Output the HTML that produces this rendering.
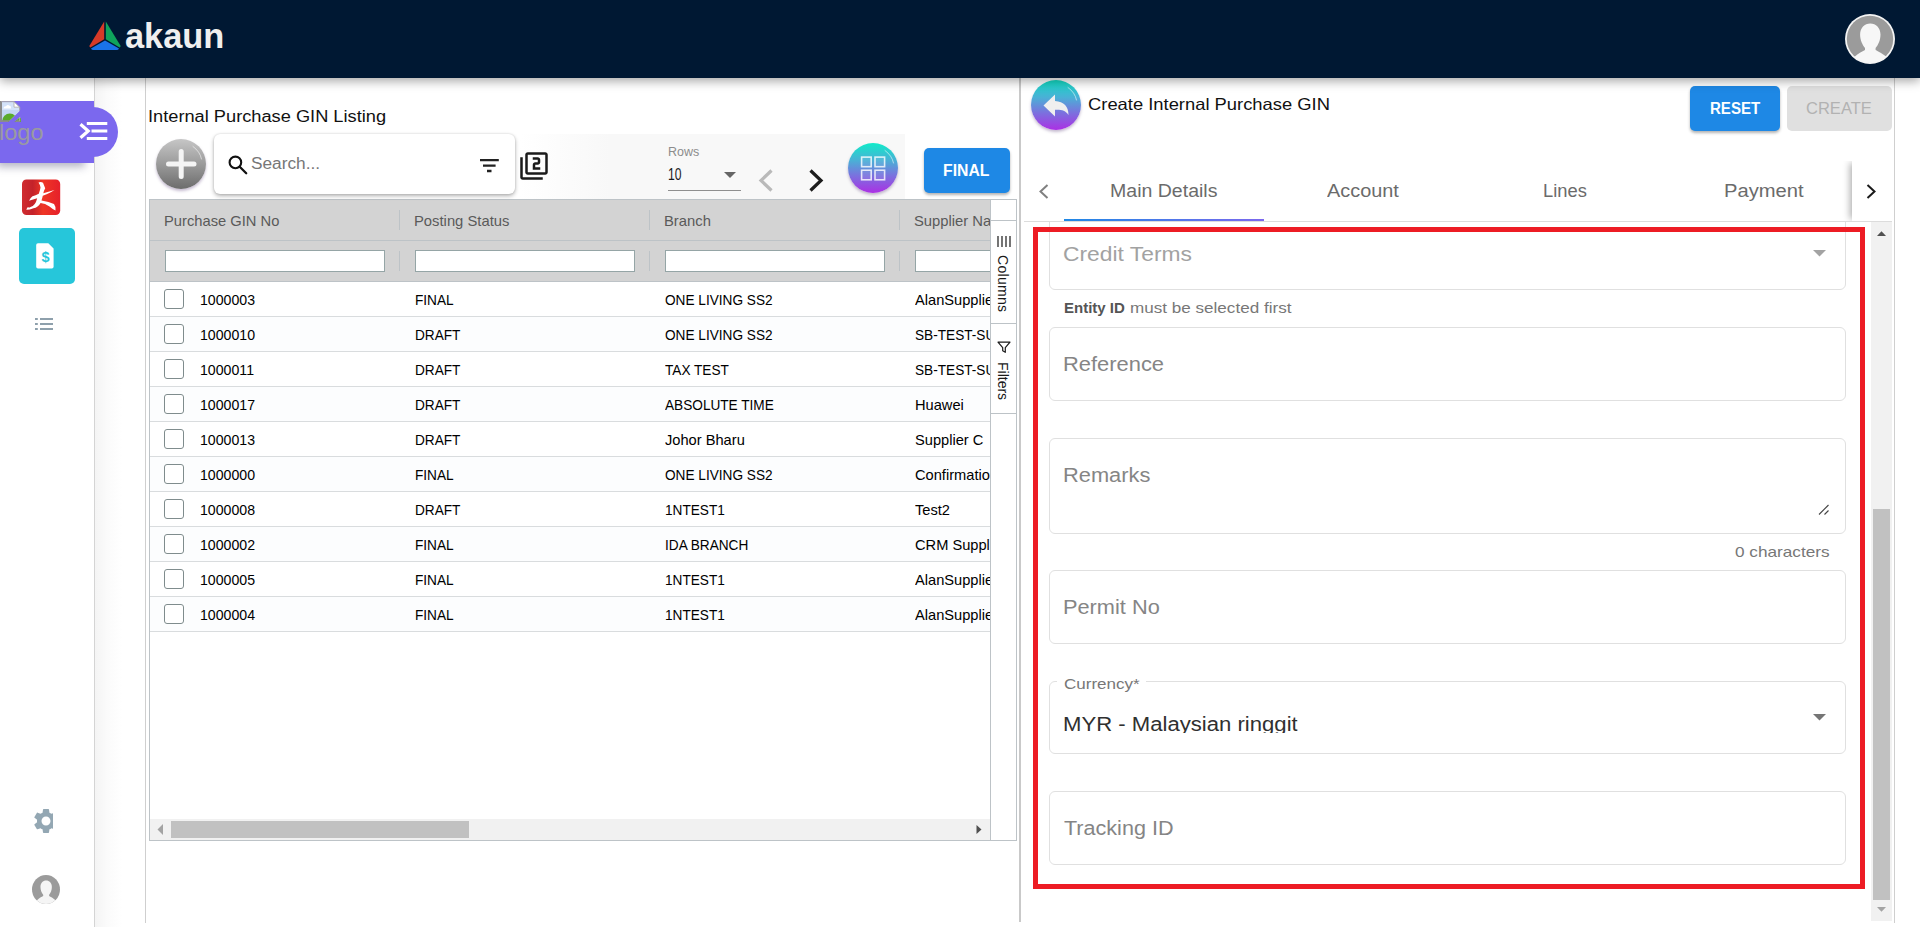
<!DOCTYPE html>
<html lang="en">
<head>
<meta charset="utf-8">
<title>Internal Purchase GIN</title>
<style>
*{box-sizing:border-box;margin:0;padding:0}
html,body{width:1920px;height:927px;overflow:hidden;background:#fff}
body{position:relative;font-family:"Liberation Sans",sans-serif;color:#111}
.abs{position:absolute}
.t{position:absolute;white-space:nowrap;line-height:1;transform-origin:0 0}
/* header */
#hdr{left:0;top:0;width:1920px;height:78px;background:#001833;box-shadow:0 3px 10px rgba(0,0,0,.36);z-index:20}
#brand{left:124px;top:17px;font-size:35px;font-weight:bold;color:#efefef}
/* sidebar */
#side{left:0;top:78px;width:95px;height:849px;background:#fff;border-right:1px solid #d4d4d4;z-index:5}
#strip{left:95px;top:78px;width:50px;height:849px;background:linear-gradient(90deg,#f4f4f4 0,#fbfbfb 25%,#fff 55%,#fff 100%)}
#ptab{left:0;top:101px;width:94px;height:62px;background:#7b68ee;box-shadow:-6px 7px 8px -3px rgba(60,60,100,.38);z-index:6}
#ppill{left:60px;top:107px;width:58px;height:50px;border-radius:0 25px 25px 0;background:#7b68ee;z-index:6}
#logotxt{left:0;top:120px;font-size:22px;color:#9a9aa0;z-index:7}
/* listing */
#ltitle{left:148px;top:107px;font-size:16px;color:#111}
#grid{left:149px;top:199px;width:868px;height:642px;border:1px solid #bdc3c7;background:#fff;overflow:hidden}
#ghead{left:0;top:0;width:840px;height:82px;background:#d3d3d3}
.hl{position:absolute;left:0;width:840px;height:1px;background:#bdc3c7}
.hc{position:absolute;transform-origin:0 0;top:13px;font-size:14.500px;color:#5a5a5a;white-space:nowrap;line-height:16px}
.sep{position:absolute;width:1px;background:#bdc3c7}
.fi{position:absolute;top:50px;width:220px;height:22px;background:#fff;border:1px solid #95a5a6}
.row{position:absolute;left:0;width:840px;height:35px;border-bottom:1px solid #d9dcde;background:#fff;font-size:14.500px;color:#000}
.row.e{background:#fcfdfe}
.row span{position:absolute;top:10px;line-height:16px;white-space:nowrap;transform-origin:0 0;transform:scaleX(.94)}
.row i{position:absolute;left:14px;top:7px;width:20px;height:20px;border:1px solid #7f8c8d;border-radius:3px;background:#fff}
.c1{left:50.300px}
.row span.c1{transform:scaleX(.975)}
.row span.m{transform:scaleX(1.01)}.c2{left:265px}.c3{left:515px}.c4{left:765px}
#gbody{left:0;top:0;width:840px;height:619px;overflow:hidden}
#hsb{left:0;top:619px;width:840px;height:21px;background:#f1f1f1}
#sbar{left:840px;top:0;width:26px;height:640px;border-left:1px solid #bdc3c7;background:#fff}
.sl{position:absolute;left:0;width:26px;height:1px;background:#bdc3c7}
.vt{position:absolute;left:5px;writing-mode:vertical-lr;font-size:14px;color:#1a1a1a;line-height:14px;white-space:nowrap}
/* toolbar */
#tbg{left:520px;top:134px;width:385px;height:65px;background:linear-gradient(90deg,#fff 0,#f8f8f8 90px,#f8f8f8 100%)}
.rb{width:50px;height:50px;border-radius:50%;box-shadow:0 2px 3px rgba(90,60,120,.35)}
#addb{left:156px;top:139px;background:linear-gradient(180deg,#c6c6c6 0,#9b9b9b 50%,#6c6c6c 100%)}
#gridb{left:848px;top:143px;background:linear-gradient(180deg,#10ebc9 0,#4ab0d6 35%,#7a72de 65%,#ab30e4 100%)}
#sbox{left:214px;top:134px;width:301px;height:60px;background:#fff;border-radius:6px;box-shadow:0 2px 4px rgba(0,0,0,.3),0 0 2px rgba(0,0,0,.15)}
#stxt{left:37px;top:22px;font-size:16px;color:#777}
#rowsl{left:668px;top:146px;font-size:12.500px;color:#8c8c8c}
#rowsv{left:668px;top:166px;font-size:16px;color:#1a1a1a}
.btn{height:45px;border-radius:5px;text-align:center;font-weight:bold;font-size:16px;line-height:45px;white-space:nowrap}
#finalb{left:924px;top:148px;width:86px;background:#1e88e5;color:#fff;box-shadow:0 2px 3px rgba(0,0,0,.3)}
/* right panel */
#vdiv{left:1019px;top:78px;width:2px;height:844px;background:#c9c9c9}
#rline{left:1894px;top:78px;width:1px;height:845px;background:#cfcfcf}
.fld{position:absolute;left:1049px;width:797px;border:1px solid #e0e0e0;border-radius:6px;background:#fff}
.lab{position:absolute;transform-origin:0 0;white-space:nowrap;line-height:1;color:#858585;font-size:19.5px;left:14px}
#backb{left:1031px;top:80px;background:linear-gradient(180deg,#12dcc4 0,#4ab0d6 35%,#7a72de 65%,#ab30e4 100%)}
#ptitle{left:1088px;top:96px;font-size:16.500px;color:#111}
#resetb{left:1690px;top:86px;width:90px;background:#1e88e5;color:#fff;box-shadow:0 2px 3px rgba(0,0,0,.3)}
#createb{left:1787px;top:86px;width:105px;background:#e0e0e0;color:#b2b2b2;font-weight:normal}
.tab{top:182px;font-size:17.500px;color:#6b6b6b}
#ink{left:1064px;top:219px;width:200px;height:2px;background:linear-gradient(90deg,#1e88e5,#7b68ee)}
#tabline{left:1024px;top:221px;width:868px;height:1px;background:#dcdcdc}
#tabnext{left:1852px;top:161px;width:40px;height:60px;background:#fff;box-shadow:-4px 0 7px -2px rgba(0,0,0,.32);clip-path:inset(0 0 0 -14px)}
#fclip{left:1049px;top:222px;width:822px;height:700px;overflow:hidden}
#fclip .fld{left:0}
.lab.dis{color:#a2a2a2}
#hint{left:0;top:0;font-size:15px;color:#777}
#hint_b{left:15px;top:78px;color:#555}
#hint_n{left:82px;top:78px}
#chars{left:686px;top:322px;font-size:15px;color:#777}
#notch{left:8px;top:459px;width:89px;height:2px;background:#fff}
#curl{left:15px;top:454px;font-size:15px;color:#777}
#curv{left:15px;top:491px;font-size:19.500px;color:#303030;height:18px;overflow:hidden}
#vsb{left:1871px;top:222px;width:21px;height:699px;background:#f1f1f1}
#red{left:1033px;top:227px;width:832px;height:662px;border:5px solid #ed1c24;z-index:9}
#hc2{left:264.25px}#hc3{left:514.25px}#hc4{left:764.25px}
.hc{transform:scaleX(1.02)}
/*FIT*/
#brand{left:125.0px;top:18.0px;transform:scaleX(0.982)}
#logotxt{left:-1.0px;top:121.5px;transform:scaleX(1.070)}
#ltitle{left:148.0px;top:109.4px;transform:scaleX(1.139)}
#stxt{left:37.0px;top:21.9px;transform:scaleX(1.079)}
#rowsl{left:668.0px;top:146.0px;transform:scaleX(1.000)}
#rowsv{left:668.0px;top:167.2px;transform:scaleX(0.758)}
#finalt{left:19.4px;top:15.0px;transform:scaleX(0.985)}
#ptitle{left:1088.0px;top:96.0px;transform:scaleX(1.113)}
#resett{left:19.8px;top:15.0px;transform:scaleX(0.941)}
#createt{left:18.5px;top:15.0px;transform:scaleX(1.033)}
#tab1{left:1109.5px;top:183.2px;transform:scaleX(1.116)}
#tab2{left:1327.0px;top:183.2px;transform:scaleX(1.136)}
#tab3{left:1543.0px;top:183.2px;transform:scaleX(1.049)}
#tab4{left:1724.0px;top:183.2px;transform:scaleX(1.152)}
#lab_ct{left:14.0px;top:22.8px;transform:scaleX(1.170)}
#lab_ref{left:14.0px;top:133.0px;transform:scaleX(1.123)}
#lab_rem{left:14.0px;top:243.9px;transform:scaleX(1.119)}
#chars{left:686.0px;top:322.0px;transform:scaleX(1.146)}
#lab_per{left:14.0px;top:376.0px;transform:scaleX(1.116)}
#curl{left:15.0px;top:454.0px;transform:scaleX(1.135)}
#curv{left:14.0px;top:493.4px;transform:scaleX(1.134)}
#lab_trk{left:15.0px;top:596.5px;transform:scaleX(1.106)}
#hc1{left:14.2px;top:13.0px;transform:scaleX(1.015)}
#hint_b{left:15.0px;top:78.0px;transform:scaleX(1.000)}
#hint_n{left:80.8px;top:78.0px;transform:scaleX(1.139)}
/*ENDFIT*/
</style>
</head>
<body>

<!-- HEADER -->
<div id="hdr" class="abs">
  <svg class="abs" style="left:88px;top:20px" width="34" height="32" viewBox="0 0 34 32">
    <path d="M16.2 1.6 L1.6 25.4 Q1 27 2.4 27.6 L16.2 19.2 Z" fill="#d63a28"/>
    <path d="M17.8 1.6 L32.4 25.4 Q33 27 31.6 27.6 L17.8 19.2 Z" fill="#0fa45c"/>
    <path d="M17 20.4 L3 28.4 Q3.6 30 5.4 30 L28.6 30 Q30.4 30 31 28.4 Z" fill="#1a73e8"/>
  </svg>
  <div id="brand" class="t">akaun</div>
  <svg class="abs" style="left:1845px;top:14px" width="50" height="50" viewBox="0 0 50 50">
    <defs><clipPath id="avc"><circle cx="25" cy="25" r="24"/></clipPath></defs>
    <circle cx="25" cy="25" r="25" fill="#f4f4f4"/>
    <circle cx="25" cy="25" r="23.2" fill="#9b9b9b"/>
    <g clip-path="url(#avc)" fill="#f7f7f7">
      <path d="M25.300 9.400 C31 9.400 35.500 14 35.500 20.500 C35.500 26 33.200 31 30.600 34 L30.600 36 C33 37.600 38 39.500 41.500 43 L46 52 L4 52 L9.400 43 C12.500 39.500 17.500 37.600 20 36 L20 34 C17.500 31 15.100 26 15.100 20.500 C15.100 14 19.500 9.400 25.300 9.400 Z"/>
    </g>
  </svg>
</div>

<!-- SIDEBAR -->
<div id="side" class="abs"></div>
<div id="strip" class="abs"></div>
<div class="abs" style="left:145px;top:78px;width:1px;height:845px;background:#cfcfcf"></div>
<div id="ptab" class="abs"></div>
<div id="ppill" class="abs"></div>
<div id="logotxt" class="t">logo</div>
<!-- broken image icon -->
<svg class="abs" style="left:0;top:101px;z-index:7" width="21" height="21" viewBox="0 0 21 21">
  <defs><clipPath id="bic"><path d="M0 0 H21 V8.600 L8.200 21 H0 Z M21 15 V21 H14.600 Z"/></clipPath></defs>
  <g clip-path="url(#bic)">
    <path d="M1 0.800 H14 L19.600 6.200 V20 H1 Z" fill="#d3e2f9"/>
    <path d="M1 9 H19.600 V20 H1 Z" fill="#c3d6f4"/>
    <path d="M3.400 7.400 Q3.600 5 6 5.200 Q7.600 2.800 9.600 4.800 Q11.400 4.800 11 7.400 Z" fill="#fff"/>
    <circle cx="9.800" cy="20" r="7.600" fill="#5aaa2c"/>
    <circle cx="18" cy="21.500" r="5" fill="#5aaa2c"/>
    <path d="M14 0.800 V6.200 H19.600 Z" fill="#fff"/>
    <path d="M14 0.800 V6.200 H19.600" fill="none" stroke="#b9b9b9" stroke-width="1"/>
    <path d="M1 0 V20.200 H20.300" fill="none" stroke="#8c8c8c" stroke-width="2"/>
    <path d="M1 0.700 H14 L19.700 6.200 V20" fill="none" stroke="#a9a9a9" stroke-width="1"/>
  </g>
</svg>
<!-- menu icon -->
<svg class="abs" style="left:78px;top:120px;z-index:7" width="32" height="22" viewBox="0 0 32 22">
  <path d="M2.500 4.300 L10.200 11 L2.500 17.800" stroke="#fff" stroke-width="3.200" fill="none"/>
  <path d="M8.800 3.500 H29.300 M13.500 11.100 H29.300 M8.800 18.600 H29.300" stroke="#fff" stroke-width="3" fill="none"/>
</svg>
<!-- red app icon -->
<svg class="abs" style="left:22px;top:179px;z-index:7" width="39" height="37" viewBox="0 0 39 37">
  <defs><linearGradient id="rg" x1="0" y1="0" x2="1" y2="0"><stop offset="0" stop-color="#d02c30"/><stop offset=".28" stop-color="#c4222a"/><stop offset=".55" stop-color="#ee3625"/><stop offset="1" stop-color="#e6202a"/></linearGradient></defs>
  <rect x="0" y="0.500" width="38.200" height="35.600" rx="4.500" fill="url(#rg)"/>
  <path d="M16.500 3.500 Q19 2.600 21 3.800 L23.200 9.200 Q21.500 12.500 21.300 14.200 L32.500 11 Q29 13.500 20.800 16.800 Q20.200 19.500 19.500 21.500 Q27 22.500 32 25 Q34 27.500 33.500 31.500 Q30 29.800 27.500 27.500 Q23 24.200 18.600 24 Q16 28.500 11.500 29.300 Q7 31 4.300 30.800 Q5 28.800 6 28 Q6.800 29 8.500 28 Q13.500 26.500 15.200 19.200 Q11 20.500 7 21.800 Q8 19 10.500 17.200 Q13.500 16.500 16.800 14.800 Q18.200 11 18.500 8.500 Q18 5.500 16.500 3.500 Z" fill="#fff"/>
</svg>
<!-- teal tile -->
<div class="abs" style="left:19px;top:228px;width:56px;height:56px;border-radius:5px;background:#26c6da;z-index:7">
  <svg class="abs" style="left:16px;top:14px" width="20" height="28" viewBox="0 0 20 28"><path d="M3 1.200 H13.300 L18.600 6.500 V24.800 Q18.600 26.600 16.800 26.600 H3 Q1.200 26.600 1.200 24.800 V3 Q1.200 1.200 3 1.200 Z" fill="#fff"/></svg>
  <div class="t" style="left:22.500px;top:21.500px;font-size:14.500px;font-weight:bold;color:#26c6da">$</div>
</div>
<!-- list icon -->
<svg class="abs" style="left:34px;top:317px;z-index:7" width="20" height="14" viewBox="0 0 20 14"><path d="M1 2 H3.800 M6 2 H19 M1 7 H3.800 M6 7 H19 M1 12 H3.800 M6 12 H19" stroke="#8ea0ac" stroke-width="2.100" fill="none"/></svg>
<!-- gear -->
<div class="abs" style="left:31px;top:806px;width:22px;height:30px;overflow:hidden;z-index:7">
  <svg class="abs" style="left:0;top:0" width="30" height="30" viewBox="0 0 24 24"><path fill="#93a7b3" d="M19.140 12.940c.04-.3.060-.61.060-.94 0-.32-.020-.64-.070-.94l2.030-1.580c.18-.14.23-.41.120-.61l-1.920-3.320c-.12-.22-.37-.29-.59-.22l-2.390.96c-.5-.38-1.030-.7-1.620-.94l-.36-2.540c-.04-.24-.24-.41-.48-.41h-3.840c-.24 0-.43.17-.47.41l-.36 2.540c-.59.24-1.130.57-1.620.94l-2.390-.96c-.22-.080-.47 0-.59.22L2.740 8.870c-.12.210-.080.470.12.610l2.030 1.580c-.05.300-.09.630-.09.940s.020.640.070.940l-2.030 1.580c-.18.140-.23.410-.12.610l1.920 3.320c.12.220.37.290.59.220l2.390-.96c.5.380 1.030.7 1.620.94l.36 2.540c.05.240.24.410.48.410h3.840c.24 0 .44-.17.470-.41l.36-2.540c.59-.24 1.130-.56 1.620-.94l2.390.96c.22.080.47 0 .59-.22l1.920-3.320c.12-.22.070-.47-.12-.61l-2.010-1.580zM12 15.600c-1.980 0-3.600-1.620-3.600-3.600s1.620-3.600 3.600-3.600 3.600 1.620 3.600 3.600-1.620 3.600-3.600 3.600z"/></svg>
</div>
<!-- small avatar -->
<svg class="abs" style="left:32px;top:875px;z-index:7" width="28" height="29" viewBox="0 0 50 50" preserveAspectRatio="none">
  <defs><clipPath id="avc2"><circle cx="25" cy="25" r="25"/></clipPath></defs>
  <circle cx="25" cy="25" r="25" fill="#9b9b9b"/>
  <g clip-path="url(#avc2)" fill="#f5f5f5"><path d="M25.300 9.400 C31 9.400 35.500 14 35.500 20.500 C35.500 26 33.200 31 30.600 34 L30.600 36 C33 37.600 38 39.500 41.500 43 L46 52 L4 52 L9.400 43 C12.500 39.500 17.500 37.600 20 36 L20 34 C17.500 31 15.100 26 15.100 20.500 C15.100 14 19.500 9.400 25.300 9.400 Z"/></g>
</svg>

<!-- LISTING -->
<div id="ltitle" class="t">Internal Purchase GIN Listing</div>

<div id="grid" class="abs">
  <div id="ghead" class="abs">
    <div class="hl" style="top:40px"></div>
    <div class="hl" style="top:81px"></div>
    <div class="hc" id="hc1">Purchase GIN No</div>
    <div class="hc" id="hc2">Posting Status</div>
    <div class="hc" id="hc3">Branch</div>
    <div class="hc" id="hc4">Supplier Name</div>
    <div class="sep" style="left:249px;top:10px;height:20px"></div>
    <div class="sep" style="left:249px;top:51px;height:20px"></div>
    <div class="sep" style="left:499px;top:10px;height:20px"></div>
    <div class="sep" style="left:499px;top:51px;height:20px"></div>
    <div class="sep" style="left:749px;top:10px;height:20px"></div>
    <div class="sep" style="left:749px;top:51px;height:20px"></div>
    <div class="sep" style="left:999px;top:10px;height:20px"></div>
    <div class="sep" style="left:999px;top:51px;height:20px"></div>
    <div class="fi" style="left:15px"></div>
    <div class="fi" style="left:265px"></div>
    <div class="fi" style="left:515px"></div>
    <div class="fi" style="left:765px"></div>
  </div>
  <div id="gbody" class="abs">
  <div class="row" style="top:82px"><i></i><span class="c1">1000003</span><span class="c2">FINAL</span><span class="c3">ONE LIVING SS2</span><span class="c4 m">AlanSupplier</span></div>
  <div class="row e" style="top:117px"><i></i><span class="c1">1000010</span><span class="c2">DRAFT</span><span class="c3">ONE LIVING SS2</span><span class="c4">SB-TEST-SUPPLIER</span></div>
  <div class="row" style="top:152px"><i></i><span class="c1">1000011</span><span class="c2">DRAFT</span><span class="c3">TAX TEST</span><span class="c4">SB-TEST-SUPPLIER</span></div>
  <div class="row e" style="top:187px"><i></i><span class="c1">1000017</span><span class="c2">DRAFT</span><span class="c3">ABSOLUTE TIME</span><span class="c4 m">Huawei</span></div>
  <div class="row" style="top:222px"><i></i><span class="c1">1000013</span><span class="c2">DRAFT</span><span class="c3 m">Johor Bharu</span><span class="c4 m">Supplier C</span></div>
  <div class="row e" style="top:257px"><i></i><span class="c1">1000000</span><span class="c2">FINAL</span><span class="c3">ONE LIVING SS2</span><span class="c4 m">Confirmation</span></div>
  <div class="row" style="top:292px"><i></i><span class="c1">1000008</span><span class="c2">DRAFT</span><span class="c3">1NTEST1</span><span class="c4 m">Test2</span></div>
  <div class="row e" style="top:327px"><i></i><span class="c1">1000002</span><span class="c2">FINAL</span><span class="c3">IDA BRANCH</span><span class="c4 m">CRM Supplier</span></div>
  <div class="row" style="top:362px"><i></i><span class="c1">1000005</span><span class="c2">FINAL</span><span class="c3">1NTEST1</span><span class="c4 m">AlanSupplier</span></div>
  <div class="row e" style="top:397px"><i></i><span class="c1">1000004</span><span class="c2">FINAL</span><span class="c3">1NTEST1</span><span class="c4 m">AlanSupplier</span></div>
  </div>
  <div id="hsb" class="abs">
    <svg class="abs" style="left:6px;top:4px" width="8" height="13" viewBox="0 0 8 13"><path d="M7 1 L1.5 6.500 L7 12 Z" fill="#a3a3a3"/></svg>
    <div class="abs" style="left:21px;top:2px;width:298px;height:17px;background:#c1c1c1"></div>
    <svg class="abs" style="left:825px;top:4px" width="8" height="13" viewBox="0 0 8 13"><path d="M1.5 2 L6.500 6.500 L1.5 11 Z" fill="#505050"/></svg>
  </div>
  <div id="sbar" class="abs">
    <div class="sl" style="top:20px"></div>
    <svg class="abs" style="left:6px;top:36px" width="14" height="11" viewBox="0 0 14 11"><path d="M1 0V11M5 0V11M9 0V11M13 0V11" stroke="#1a1a1a" stroke-width="1.2" fill="none"/></svg>
    <div class="vt" style="top:55px;letter-spacing:.3px">Columns</div>
    <div class="sl" style="top:123px"></div>
    <svg class="abs" style="left:6px;top:141px" width="14" height="13" viewBox="0 0 14 13"><path d="M1 1.2 H13 L8.300 6.600 V11.300 L5.700 9.800 V6.600 Z" stroke="#1a1a1a" stroke-width="1.2" fill="none" stroke-linejoin="round"/></svg>
    <div class="vt" style="top:162px">Filters</div>
    <div class="sl" style="top:213px"></div>
  </div>
</div>

<!-- TOOLBAR -->
<div id="tbg" class="abs"></div>
<div id="addb" class="abs rb">
  <svg class="abs" style="left:0;top:0" width="50" height="50" viewBox="0 0 50 50"><path d="M12.500 25 H38 M25.200 12.500 V37.500" stroke="#f4f4f4" stroke-width="5" stroke-linecap="round" fill="none"/><path d="M37 7.500 Q44 12.500 45.500 20" stroke="rgba(255,255,255,.55)" stroke-width="1" fill="none" stroke-linecap="round"/></svg>
</div>
<div id="sbox" class="abs">
  <svg class="abs" style="left:13px;top:20px" width="22" height="22" viewBox="0 0 22 22"><circle cx="8.400" cy="8.400" r="5.800" stroke="#111" stroke-width="2.100" fill="none"/><path d="M12.700 12.700 L19.200 19.200" stroke="#111" stroke-width="2.300" stroke-linecap="round"/></svg>
  <div class="t" id="stxt">Search...</div>
  <svg class="abs" style="left:265px;top:24px" width="20" height="15" viewBox="0 0 20 15"><path d="M1 2.100 H19.800 M4 7.600 H16.600 M8 13 H12.500" stroke="#222" stroke-width="2.300" fill="none"/></svg>
</div>
<svg class="abs" style="left:519px;top:151px" width="30" height="30" viewBox="0 0 24 24"><path fill="#1b1b1b" d="M3 5H1v16c0 1.100.9 2 2 2h16v-2H3V5zm18-4H7c-1.100 0-2 .9-2 2v14c0 1.100.9 2 2 2h14c1.100 0 2-.9 2-2V3c0-1.100-.9-2-2-2zm0 16H7V3h14v14zm-4-4h-4v-2h2c1.100 0 2-.89 2-2V7c0-1.110-.9-2-2-2h-4v2h4v2h-2c-1.100 0-2 .89-2 2v4h6v-2z"/></svg>
<div class="t" id="rowsl">Rows</div>
<div class="t" id="rowsv">10</div>
<svg class="abs" style="left:724px;top:172px" width="12" height="6" viewBox="0 0 12 6"><path d="M0 0 H12 L6 6 Z" fill="#666"/></svg>
<div class="abs" style="left:668px;top:190px;width:73px;height:1px;background:#8f8f8f"></div>
<svg class="abs" style="left:757px;top:168px" width="17" height="25" viewBox="0 0 17 25"><path d="M14.500 2.500 L4 12.500 L14.500 22.500" stroke="#b9b9b9" stroke-width="3.200" fill="none"/></svg>
<svg class="abs" style="left:808px;top:168px" width="17" height="25" viewBox="0 0 17 25"><path d="M2.500 2.500 L13 12.500 L2.500 22.500" stroke="#1c1c1c" stroke-width="3.200" fill="none"/></svg>
<div id="gridb" class="abs rb">
  <svg class="abs" style="left:0;top:0" width="50" height="50" viewBox="0 0 50 50"><g stroke="rgba(255,255,255,.8)" stroke-width="1.600" fill="rgba(255,255,255,.08)"><rect x="13.600" y="14.100" width="9.600" height="9.600"/><rect x="27" y="14.100" width="9.600" height="9.600"/><rect x="13.600" y="27.200" width="9.600" height="9.600"/><rect x="27" y="27.200" width="9.600" height="9.600"/></g><path d="M37 7.500 Q44 12.500 45.500 20" stroke="rgba(255,255,255,.55)" stroke-width="1" fill="none" stroke-linecap="round"/></svg>
</div>
<div id="finalb" class="abs btn"><span class="t" id="finalt">FINAL</span></div>

<!-- RIGHT PANEL -->
<div id="vdiv" class="abs"></div>
<div id="rline" class="abs"></div>
<div id="backb" class="abs rb">
  <svg class="abs" style="left:0;top:0" width="50" height="50" viewBox="0 0 50 50"><path d="M12.500 25.500 L24 14.500 V21 C33 21.500 37.500 26.500 37.500 35 C34.500 30.500 30.500 29.500 24 29.800 V36.500 Z" fill="#efefef"/><path d="M37 7.500 Q44 12.500 45.500 20" stroke="rgba(255,255,255,.55)" stroke-width="1" fill="none" stroke-linecap="round"/></svg>
</div>
<div class="t" id="ptitle">Create Internal Purchase GIN</div>
<div id="resetb" class="abs btn"><span class="t" id="resett">RESET</span></div>
<div id="createb" class="abs btn"><span class="t" id="createt">CREATE</span></div>

<!-- tabs -->
<svg class="abs" style="left:1037px;top:183px" width="13" height="17" viewBox="0 0 13 17"><path d="M10.500 2 L3.500 8.500 L10.500 15" stroke="#808080" stroke-width="2" fill="none"/></svg>
<div class="t tab" id="tab1">Main Details</div>
<div class="t tab" id="tab2">Account</div>
<div class="t tab" id="tab3">Lines</div>
<div class="t tab" id="tab4">Payment</div>
<div id="ink" class="abs"></div>
<div id="tabline" class="abs"></div>
<div id="tabnext" class="abs">
  <svg class="abs" style="left:13px;top:22px" width="13" height="17" viewBox="0 0 13 17"><path d="M2.500 2 L9.500 8.500 L2.500 15" stroke="#1a1a1a" stroke-width="2" fill="none"/></svg>
</div>

<!-- form -->
<div id="fclip" class="abs">
  <div class="fld" style="top:-30px;height:98px"></div>
  <div class="lab dis" id="lab_ct">Credit Terms</div>
  <svg class="abs" style="left:764px;top:28px" width="13" height="7" viewBox="0 0 13 7"><path d="M0 0 H13 L6.500 6.500 Z" fill="#a3a3a3"/></svg>
  <div class="abs" id="hint"><b class="t" id="hint_b">Entity ID</b> <span class="t" id="hint_n">must be selected first</span></div>

  <div class="fld" style="top:105px;height:74px"></div>
  <div class="lab" id="lab_ref">Reference</div>

  <div class="fld" style="top:216px;height:96px"></div>
  <div class="lab" id="lab_rem">Remarks</div>
  <svg class="abs" style="left:769px;top:282px" width="12" height="12" viewBox="0 0 12 12"><path d="M1 10.500 L10.500 1 M6.500 10.500 L10.500 6.500" stroke="#444" stroke-width="1.100" fill="none"/></svg>
  <div class="t" id="chars">0 characters</div>

  <div class="fld" style="top:348px;height:74px"></div>
  <div class="lab" id="lab_per">Permit No</div>

  <div class="fld" style="top:459px;height:73px"></div>
  <div class="abs" id="notch"></div>
  <div class="t" id="curl">Currency*</div>
  <div class="t" id="curv">MYR - Malaysian ringgit</div>
  <svg class="abs" style="left:764px;top:491.600px" width="13" height="7" viewBox="0 0 13 7"><path d="M0 0 H13 L6.500 6.500 Z" fill="#757575"/></svg>

  <div class="fld" style="top:569px;height:74px"></div>
  <div class="lab" id="lab_trk">Tracking ID</div>
</div>

<!-- vertical scrollbar -->
<div id="vsb" class="abs">
  <svg class="abs" style="left:6px;top:9px" width="9" height="5" viewBox="0 0 9 5"><path d="M0 5 H9 L4.500 0.300 Z" fill="#505050"/></svg>
  <div class="abs" style="left:2px;top:287px;width:17px;height:391px;background:#c1c1c1"></div>
  <svg class="abs" style="left:6px;top:685px" width="9" height="5" viewBox="0 0 9 5"><path d="M0 0 H9 L4.500 4.700 Z" fill="#a3a3a3"/></svg>
</div>
<div id="red" class="abs"></div>

</body>
</html>
